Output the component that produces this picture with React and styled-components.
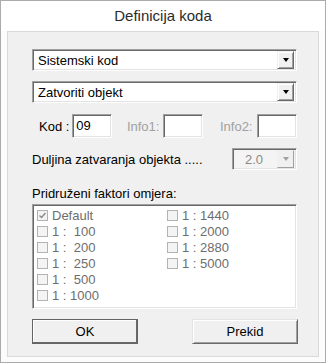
import React from "react";
import styled, { createGlobalStyle } from "styled-components";

const Global = createGlobalStyle`
  html, body { margin: 0; padding: 0; background: #fff; }
  body { font-family: "Liberation Sans", Arial, sans-serif; }
`;

const Window = styled.div`
  width: 326px;
  height: 363px;
  box-sizing: border-box;
  border: 1px solid #ababab;
  background: #fcfcfc;
  display: flex;
  flex-direction: column;
`;

const Title = styled.div`
  height: 29px;
  display: flex;
  align-items: center;
  justify-content: center;
  font-size: 15px;
  color: #2b2b2b;
  background: #fff;
  padding-bottom: 1px;
`;

const Panel = styled.div`
  margin: 0 6px;
  width: 312px;
  height: 326px;
  box-sizing: border-box;
  border: 1px solid #d9d9d9;
  background: #f0f0f0;
  display: flex;
  flex-direction: column;
  padding: 16px 0 0 24px;
`;

const sunken = `
  box-sizing: border-box;
  border-style: solid;
  border-width: 1px;
  border-color: #a0a0a0 #fff #fff #a0a0a0;
  box-shadow: inset 1px 1px 0 #696969, inset -1px -1px 0 #e3e3e3;
`;

const Combo = styled.div`
  ${sunken}
  width: ${(p) => p.$w || 265}px;
  height: 22px;
  margin-top: ${(p) => p.$mt || 0}px;
  background: ${(p) => (p.$disabled ? "#f4f4f4" : "#fff")};
  display: flex;
  align-items: center;
  padding: 2px 2px 2px 4px;
  font-size: 13px;
  color: ${(p) => (p.$disabled ? "#8a8a8a" : "#000")};
`;

const ComboText = styled.span`
  flex: 1;
  padding-left: ${(p) => p.$pl || 1}px;
`;

const ArrowBtn = styled.div`
  width: 17px;
  height: 18px;
  box-sizing: border-box;
  background: #f0f0f0;
  border-style: solid;
  border-width: 1px;
  border-color: ${(p) => (p.$disabled ? "#f0f0f0 #a0a0a0 #a0a0a0 #f0f0f0" : "#f0f0f0 #696969 #696969 #f0f0f0")};
  box-shadow: ${(p) => (p.$disabled ? "none" : "inset 1px 1px 0 #fff, inset -1px -1px 0 #a0a0a0")};
  display: flex;
  align-items: center;
  justify-content: center;
  &::after {
    content: "";
    border-left: 3.5px solid transparent;
    border-right: 3.5px solid transparent;
    border-top: 4px solid ${(p) => (p.$disabled ? "#a0a0a0" : "#000")};
  }
`;

const Row = styled.div`
  display: flex;
  align-items: center;
  width: 265px;
  height: ${(p) => p.$h || 24}px;
  margin-top: ${(p) => p.$mt || 0}px;
  font-size: 13px;
`;

const Label = styled.span`
  color: ${(p) => (p.$disabled ? "#a0a0a0" : "#000")};
  margin-left: ${(p) => p.$ml || 0}px;
  margin-right: ${(p) => p.$mr || 0}px;
  white-space: pre;
`;

const Input = styled.div`
  ${sunken}
  width: 40px;
  height: 24px;
  background: #fff;
  padding: 3px 3px;
  font-size: 13px;
  color: #000;
  line-height: 16px;
`;

const Spacer = styled.div`
  flex: 1;
`;

const ListLabel = styled.div`
  font-size: 13px;
  color: #000;
  margin-top: 16px;
  height: 16px;
  line-height: 16px;
`;

const ListBox = styled.div`
  ${sunken}
  width: 265px;
  height: 105px;
  margin-top: 2px;
  background: #fff;
  padding: 2px 0 0 2px;
  display: grid;
  grid-template-columns: 130px 130px;
  grid-auto-flow: column;
  grid-template-rows: repeat(6, 16px);
  align-content: start;
`;

const Item = styled.div`
  display: flex;
  align-items: center;
  font-size: 13px;
  color: #6d6d6d;
  white-space: pre;
  padding-left: 2px;
`;

const Box = styled.span`
  width: 11px;
  height: 11px;
  box-sizing: border-box;
  border: 1px solid #b2b2b2;
  background: #f4f4f4;
  margin-right: 4px;
  display: inline-flex;
  align-items: center;
  justify-content: center;
`;

const Buttons = styled.div`
  display: flex;
  justify-content: space-between;
  width: 266px;
  margin-top: 10px;
`;

const Button = styled.div`
  width: 106px;
  height: 25px;
  box-sizing: border-box;
  background: #f0f0f0;
  font-size: 13px;
  color: #000;
  display: flex;
  align-items: center;
  justify-content: center;
  border: 1px solid;
  border-color: ${(p) => (p.$default ? "#646464" : "#e3e3e3 #696969 #696969 #e3e3e3")};
  box-shadow: ${(p) =>
    p.$default
      ? "inset -1px -1px 0 #696969, inset 1px 1px 0 #fff"
      : "inset 1px 1px 0 #fff, inset -1px -1px 0 #a0a0a0"};
`;

const items = [
  ["Default", true],
  ["1 :  100"],
  ["1 :  200"],
  ["1 :  250"],
  ["1 :  500"],
  ["1 : 1000"],
  ["1 : 1440"],
  ["1 : 2000"],
  ["1 : 2880"],
  ["1 : 5000"],
];

function Check({ checked }) {
  return (
    <Box>
      {checked && (
        <svg width="9" height="9" viewBox="0 0 9 9">
          <path d="M1.5 4.5 L3.5 6.5 L7.5 2" fill="none" stroke="#8a8a8a" strokeWidth="1.4" />
        </svg>
      )}
    </Box>
  );
}

export default function App() {
  return (
    <>
      <Global />
      <Window>
        <Title>Definicija koda</Title>
        <Panel>
          <Combo $mt={1}>
            <ComboText>Sistemski kod</ComboText>
            <ArrowBtn />
          </Combo>
          <Combo $mt={10}>
            <ComboText>Zatvoriti objekt</ComboText>
            <ArrowBtn />
          </Combo>
          <Row $mt={11} $h={24}>
            <Label $ml={7} $mr={3}>Kod :</Label>
            <Input>09</Input>
            <Label $disabled $ml={15} $mr={4}>Info1:</Label>
            <Input />
            <Label $disabled $ml={17} $mr={5}>Info2:</Label>
            <Input />
          </Row>
          <Row $mt={10} $h={22}>
            <Label>Duljina zatvaranja objekta .....</Label>
            <Spacer />
            <Combo $w={65} $disabled>
              <ComboText $pl={8}>2.0</ComboText>
              <ArrowBtn $disabled />
            </Combo>
          </Row>
          <ListLabel>Pridruženi faktori omjera:</ListLabel>
          <ListBox>
            {items.map(([t, c]) => (
              <Item key={t}>
                <Check checked={c} />
                {t}
              </Item>
            ))}
          </ListBox>
          <Buttons>
            <Button $default>OK</Button>
            <Button>Prekid</Button>
          </Buttons>
        </Panel>
      </Window>
    </>
  );
}
